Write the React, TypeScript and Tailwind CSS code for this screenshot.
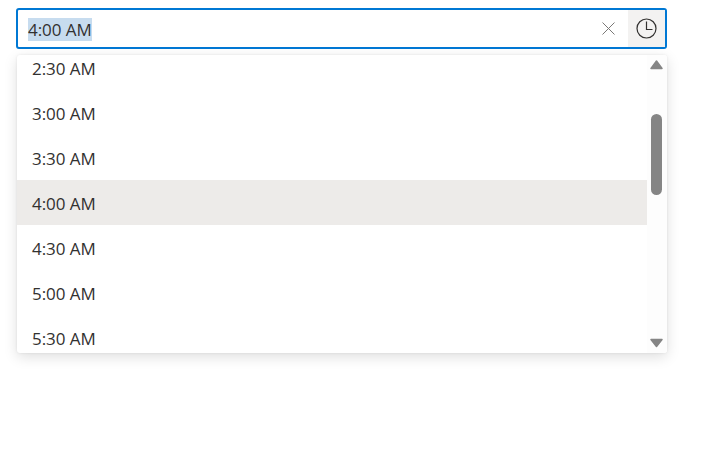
const times = ["2:30 AM", "3:00 AM", "3:30 AM", "4:00 AM", "4:30 AM", "5:00 AM", "5:30 AM"];

export default function App() {
  return (
    <div className="h-[473px] w-[712px] bg-white pl-4 pt-2 text-[#323130] [font-family:'Open_Sans','Noto_Sans',sans-serif]">
      <div className="flex h-[41px] w-[651px] items-stretch rounded-[3px] border-2 border-[#0078d4] bg-white">
        <div className="flex flex-1 items-center pl-[10px] pt-[1px]">
          <span className="bg-[#c7dcef] text-[17px] leading-[23px] tracking-[-0.05px]">4:00 AM</span>
        </div>
        <button className="flex w-[38px] items-center justify-center pr-[2px] text-[#7a7876]">
          <svg width="13" height="13" viewBox="0 0 13 13" fill="none" stroke="currentColor" strokeWidth="1">
            <path d="M0.5 0.5l12 12M12.5 0.5L0.5 12.5" />
          </svg>
        </button>
        <button className="flex w-[37px] items-center justify-center bg-[#f3f2f1] pr-[1px]">
          <svg width="21" height="21" viewBox="0 0 21 21" fill="none" stroke="#323130" strokeWidth="1.2">
            <circle cx="10.5" cy="10.5" r="9.5" />
            <path d="M10.5 3.5V11.5H16.5" />
          </svg>
        </button>
      </div>
      <div className="ml-px mt-[6px] flex h-[298px] w-[650px] overflow-hidden rounded-[3px] bg-white shadow-[0_4px_14px_rgba(0,0,0,0.13),0_0_3px_rgba(0,0,0,0.08)]">
        <ul className="-mt-[10px] w-[630px] shrink-0">
          {times.map((t) => (
            <li
              key={t}
              className={`flex h-[45px] items-center pl-[15px] pt-[2px] text-[17px] tracking-[-0.05px] ${t === "4:00 AM" ? "bg-[#edebe9]" : ""}`}
            >
              {t}
            </li>
          ))}
        </ul>
        <div className="flex flex-1 flex-col items-center bg-[#fdfdfd] pb-[5px] pr-[1px] pt-[4px]">
          <svg width="15" height="11" viewBox="0 0 15 11" fill="#858585" stroke="#858585" strokeWidth="1.5" strokeLinejoin="round">
            <path d="M7.5 2L13 9.5H2Z" />
          </svg>
          <div className="mt-[44px] h-[81px] w-[11px] rounded-full bg-[#858585]" />
          <div className="flex-1" />
          <svg width="15" height="10" viewBox="0 0 15 10" fill="#858585" stroke="#858585" strokeWidth="1.5" strokeLinejoin="round">
            <path d="M7.5 8.5L2 1.5H13Z" />
          </svg>
        </div>
      </div>
    </div>
  );
}
